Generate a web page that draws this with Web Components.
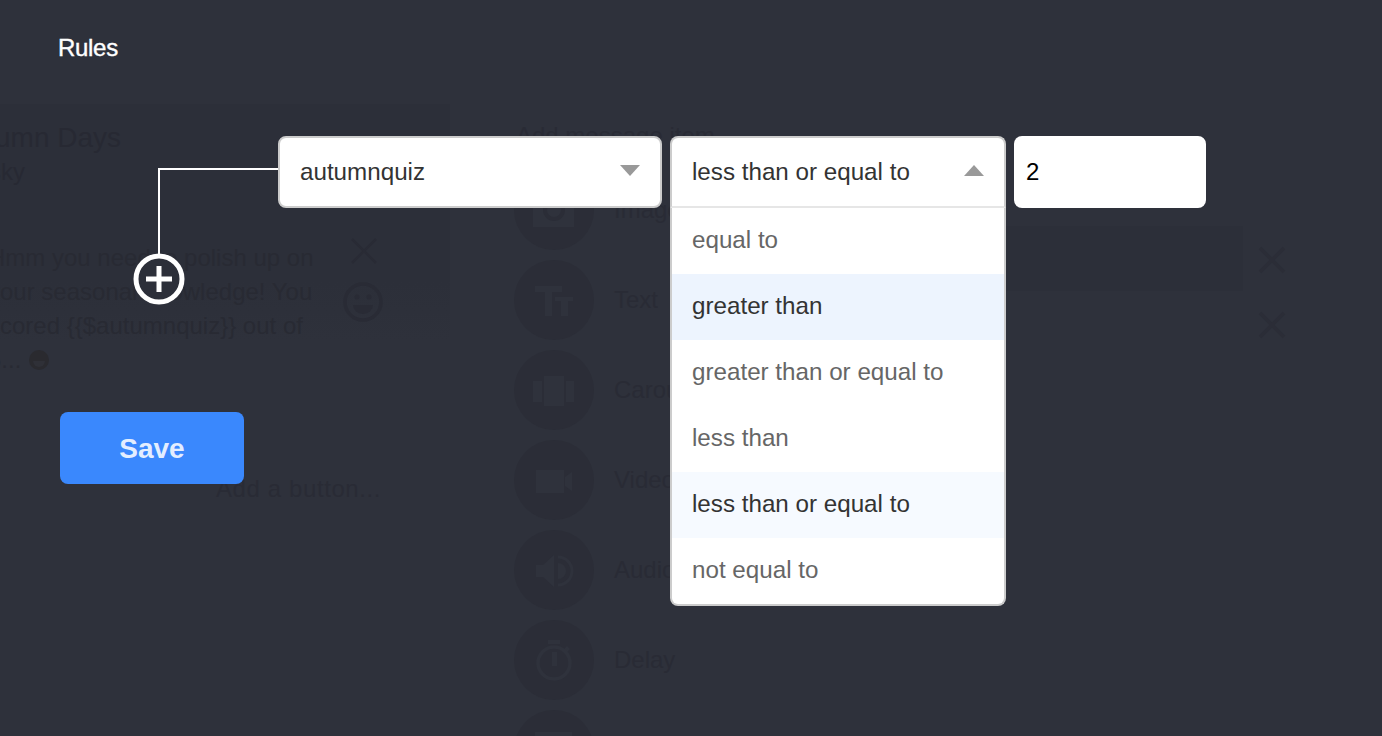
<!DOCTYPE html>
<html>
<head>
<meta charset="utf-8">
<title>Rules</title>
<style>
html, body { margin: 0; height: 100%; background: #2e313b; overflow: hidden; }
body { font-family: "Liberation Sans", Arial, sans-serif; position: relative; width: 1382px; height: 736px; }
</style>
</head>
<body>
<dim-builder></dim-builder>
<rules-overlay>
    <rule-select slot="rule" value="autumnquiz" style="width:384px"></rule-select>
    <rule-select slot="rule" value="less than or equal to" style="width:336px" open
        options="equal to|greater than|greater than or equal to|less than|less than or equal to|not equal to"
        hover="greater than"></rule-select>
    <rule-input slot="rule" value="2"></rule-input>
</rules-overlay>

<script>
const DISC = '#2b2d37';
const GLYPH = '#2f323c';

const ICONS = {
    image: `<path d="M19 22h41v35H19z"/><circle cx="40" cy="40" r="9" fill="none" stroke="${DISC}" stroke-width="4"/>`,
    text: '<path d="M21 26h27v6H38v24h-7V32H21z"/><path d="M41 37h18v4h-5v15h-7V41h-6z"/>',
    carousel: '<path d="M30 26h20v30H30zM19 31h9v21h-9zM52 31h8v21h-8z"/>',
    video: '<path d="M22 30h28v23H22zM51 37l7-5v19l-7-5z"/>',
    audio: `<path d="M22 35h7l11-10v32L29 47h-7z"/><path d="M44 33a8 8 0 0 1 0 16z"/><path d="M44 27a14 14 0 0 1 0 28" fill="none" stroke="${GLYPH}" stroke-width="3"/>`,
    delay: `<path d="M34 20h12v4H34zM53 26l3 3-3 3-3-3z"/><circle cx="40" cy="43" r="16" fill="none" stroke="${GLYPH}" stroke-width="3.500"/><path d="M38 32h5v14h-5z"/>`,
    more: '<path d="M21 22h37v28H21z"/>'
};

class DimBuilder extends HTMLElement {
    constructor() {
        super();
        this.attachShadow({mode: 'open'});
        let items = [['image', 'Image'], ['text', 'Text'], ['carousel', 'Carousel'], ['video', 'Video'],
            ['audio', 'Audio'], ['delay', 'Delay'], ['more', '']];
        let rows = items.map(([icon, label]) => `
            <div class="item">
                <svg width="80" height="80" viewBox="0 0 80 80"><circle cx="40" cy="40" r="40" fill="${DISC}"/><g fill="${GLYPH}">${ICONS[icon]}</g></svg>
                <span>${label}</span>
            </div>`).join('');
        this.shadowRoot.innerHTML = `
<style>
:host { display: block; width: 1382px; height: 736px; overflow: hidden; padding-top: 104px; box-sizing: border-box; color: #292b35; font-size: 24px; }
* { box-sizing: border-box; }
#cols { display: flex; height: 632px; }
#left { width: 450px; }
#bubble { height: 296px; background: linear-gradient(#2c2f39, #2c2f39 60%, #2e313b 80%); overflow: hidden; padding-top: 17px; }
#bubble h2 { margin: 0 0 0 -47px; font-size: 28px; font-weight: normal; line-height: 34px; color: #272933; }
#bubble small { display: block; margin-left: -39px; font-size: 24px; line-height: 34px; color: #272933; }
#msg { margin: 52px 0 0 -12px; display: flex; }
#msg p { margin: 0; width: 350px; line-height: 34px; white-space: nowrap; color: #282a33; }
#msg svg { display: inline-block; vertical-align: -3px; }
#tools { display: flex; flex-direction: column; gap: 18px; margin: -3px 0 0 13px; flex: none; }
.x { stroke: #292b35; stroke-width: 2.500; }
#addbtn { margin: 75px 0 0 216px; white-space: nowrap; font-size: 24px; color: #292b35; letter-spacing: .6px; }
#right { flex: 1; padding: 18px 0 0 64px; }
#right h3 { margin: 0 0 0 2px; height: 48px; font-size: 24px; font-weight: normal; line-height: 28px; color: #292b35; white-space: nowrap; }
#list { display: flex; flex-direction: column; gap: 10px; }
.item { display: flex; align-items: center; gap: 20px; height: 80px; }
#fields { position: absolute; left: 1006px; top: 226px; }
#field { width: 237px; height: 65px; background: #2c2f39; }
#xs { position: absolute; left: 1258px; top: 246px; display: flex; flex-direction: column; gap: 37px; }
#xs .x { stroke: #2b2d37; stroke-width: 3.500; }
</style>
<div id="cols">
    <div id="left">
        <div id="bubble">
            <h2>Autumn Days</h2>
            <small>Frisky</small>
            <div id="msg">
                <p>Hmm you need to polish up on<br>your seasonal knowledge! You<br>scored {{$autumnquiz}} out of<br>5...
                    <svg width="22" height="22" viewBox="0 0 22 22"><circle cx="11" cy="11" r="10" fill="#2a2a2f"/><path d="M5 12h12a6 6 0 0 1-12 0z" fill="#2f3037"/></svg></p>
                <div id="tools">
                    <svg width="26" height="26" viewBox="0 0 26 26" style="display:block"><path class="x" d="M1 1l24 24M25 1L1 25"/></svg>
                    <svg width="40" height="40" viewBox="0 0 40 40" style="display:block;margin-left:-8px"><circle cx="20" cy="20" r="18" fill="none" stroke="#292b35" stroke-width="3.500"/><circle cx="14" cy="15" r="2.500" fill="#292b35"/><circle cx="26" cy="15" r="2.500" fill="#292b35"/><path d="M10 23h20a10 9 0 0 1-20 0z" fill="#292b35"/></svg>
                </div>
            </div>
        </div>
        <div id="addbtn">Add a button...</div>
    </div>
    <div id="right">
        <h3>Add message item</h3>
        <div id="list">${rows}</div>
    </div>
</div>
<div id="fields"><div id="field"></div></div>
<div id="xs">
    <svg width="28" height="28" viewBox="0 0 28 28"><path class="x" d="M2 2l24 24M26 2L2 26"/></svg>
    <svg width="28" height="28" viewBox="0 0 28 28"><path class="x" d="M2 2l24 24M26 2L2 26"/></svg>
</div>`;
    }
}

const selectTemplate = document.createElement('template');
selectTemplate.innerHTML = `
<style>
:host { display: block; position: relative; color: #333; font-size: 24.2px; flex: none; }
* { box-sizing: border-box; }
#control { height: 72px; display: flex; align-items: center; justify-content: space-between; background: #fff;
    border: 2px solid #ccc; border-radius: 8px; padding: 0 20px; }
#arrow { width: 0; height: 0; border: solid transparent; border-width: 11px 10px 0; border-top-color: #999; margin-top: -4px; }
:host([open]) #control { border-radius: 8px 8px 0 0; border-bottom-color: #e6e6e6; }
:host([open]) #arrow { border-width: 0 10px 11px; border-bottom-color: #999; }
#menu { display: none; position: absolute; left: 0; right: 0; top: 72px; background: #fff; border: 2px solid #ccc;
    border-top: 0; border-radius: 0 0 8px 8px; }
:host([open]) #menu { display: block; }
.option { height: 66px; line-height: 64px; padding: 0 20px; color: #666; white-space: nowrap; }
.option.hover { background: #edf4fe; color: #333; }
.option.selected { background: #f6faff; color: #333; }
</style>
<div id="control"><span id="value"></span><div id="arrow"></div></div>
<div id="menu"></div>`;

class RuleSelect extends HTMLElement {
    constructor() {
        super();
        this.attachShadow({mode: 'open'});
        this.shadowRoot.append(selectTemplate.content.cloneNode(true));
    }

    connectedCallback() {
        let value = this.getAttribute('value');
        this.shadowRoot.querySelector('#value').textContent = value;
        let options = (this.getAttribute('options') || '').split('|').filter(Boolean);
        let menu = this.shadowRoot.querySelector('#menu');
        for (let text of options) {
            let div = document.createElement('div');
            div.className = 'option';
            if (text === value) div.classList.add('selected');
            if (text === this.getAttribute('hover')) div.classList.add('hover');
            div.textContent = text;
            menu.append(div);
        }
    }
}

class RuleInput extends HTMLElement {
    constructor() {
        super();
        this.attachShadow({mode: 'open'});
        this.shadowRoot.innerHTML = `
<style>
:host { display: block; flex: none; }
div { width: 192px; height: 72px; line-height: 72px; background: #fff; border-radius: 8px; padding-left: 12px; color: #000; font-size: 24px; box-sizing: border-box; }
</style>
<div></div>`;
        this.shadowRoot.querySelector('div').textContent = this.getAttribute('value');
    }
}

class RulesOverlay extends HTMLElement {
    constructor() {
        super();
        this.attachShadow({mode: 'open'});
        this.shadowRoot.innerHTML = `
<style>
:host { display: block; position: absolute; inset: 0; }
* { box-sizing: border-box; }
h1 { margin: 0; padding: 34px 0 0 58px; height: 136px; font-size: 24px; line-height: 28px; font-weight: normal; color: #fff; letter-spacing: -.3px; -webkit-text-stroke: .4px #fff; }
#row { display: flex; gap: 8px; height: 276px; padding-left: 158px; }
#wire { width: 120px; height: 118px; margin: 32px -8px 0 0; border: solid #fff; border-width: 2px 0 0 2px; position: relative; flex: none; }
#add { position: absolute; left: -27px; top: 83px; display: block; }
button { display: block; margin-left: 60px; width: 184px; height: 72px; border: 0; border-radius: 8px; background: #3a88fd; color: #e3eeff; font: bold 28px "Liberation Sans", Arial, sans-serif; padding: 2px 0 0; }
</style>
<h1>Rules</h1>
<div id="row">
    <div id="wire">
        <svg id="add" width="52" height="52" viewBox="0 0 52 52">
            <circle cx="26" cy="26" r="23" fill="#2c2f39" stroke="#fff" stroke-width="5"/>
            <path d="M13 26h26M26 13v26" stroke="#fff" stroke-width="5"/>
        </svg>
    </div>
    <slot name="rule"></slot>
</div>
<button>Save</button>`;
    }
}

customElements.define('dim-builder', DimBuilder);
customElements.define('rule-select', RuleSelect);
customElements.define('rule-input', RuleInput);
customElements.define('rules-overlay', RulesOverlay);
</script>
</body>
</html>
